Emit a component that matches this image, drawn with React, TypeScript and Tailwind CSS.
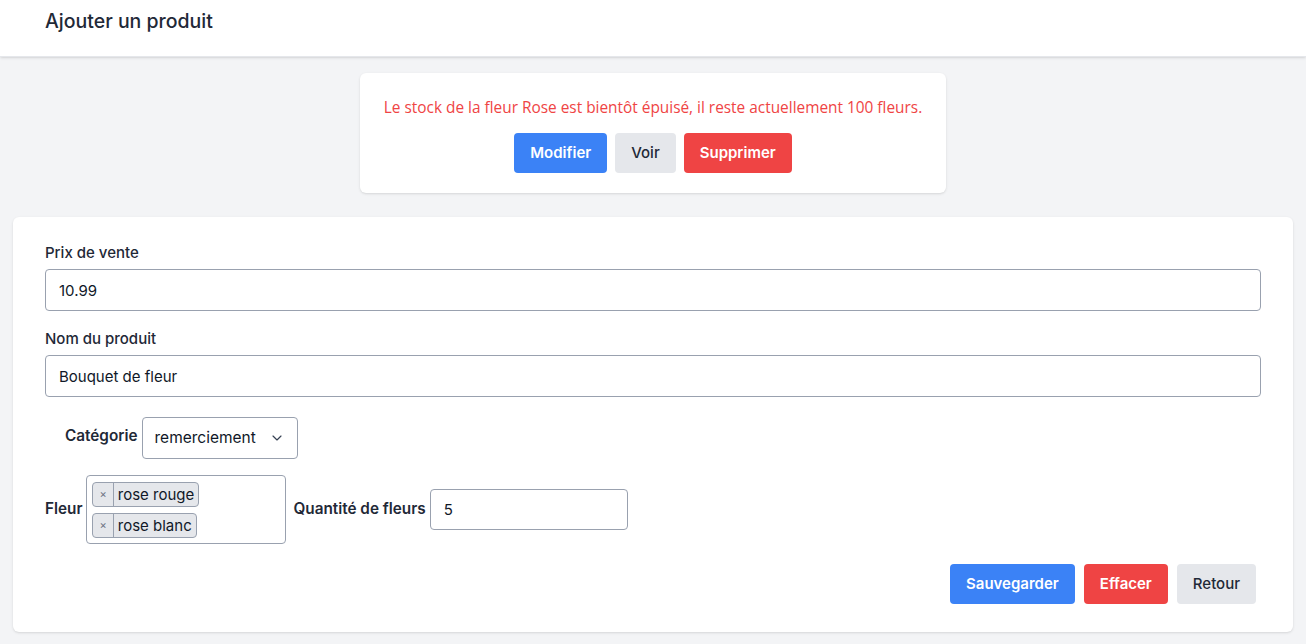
import { ChevronDown } from "lucide-react";

const Tag = ({ label }: { label: string }) => (
  <span className="inline-flex items-center h-[25px] bg-[#e5e7eb] border border-gray-400 rounded text-[15px] text-gray-900">
    <span className="px-1.5 text-[11px] text-gray-500 border-r border-gray-400 h-full flex items-center">×</span>
    <span className="px-1 leading-none">{label}</span>
  </span>
);

export default function App() {
  return (
    <div className="min-h-screen bg-[#f3f4f6] font-['Inter',sans-serif] text-[#1f2937]">
      {/* En-tête */}
      <header className="h-[57px] bg-white shadow-sm border-b border-gray-200 px-[45px] pt-[7px]">
        <h1 className="text-[19.5px] font-medium">Ajouter un produit</h1>
      </header>

      {/* Alerte stock */}
      <div className="flex justify-center pt-4">
        <div className="w-[586px] bg-white rounded-md shadow-sm px-4 pt-[23px] pb-5 flex flex-col items-center gap-[13px]">
          <p className="whitespace-nowrap text-[15.4px] leading-6 text-[#ef4444] font-['Open_Sans',sans-serif]">
            Le stock de la fleur Rose est bientôt épuisé, il reste actuellement 100 fleurs.
          </p>
          <div className="flex gap-2">
            <button className="h-10 px-4 rounded bg-[#3b82f6] text-white font-semibold text-[15px]">Modifier</button>
            <button className="h-10 px-4 rounded bg-[#e5e7eb] font-medium text-[15px]">Voir</button>
            <button className="h-10 px-4 rounded bg-[#ef4444] text-white font-semibold text-[15px]">Supprimer</button>
          </div>
        </div>
      </div>

      {/* Formulaire */}
      <div className="px-[13px] pt-[24px] pb-3">
        <div className="bg-white rounded-md shadow-sm px-8 pt-[26px] pb-[28px]">
          <label className="block text-[15px] leading-5 font-medium mb-[6px]">Prix de vente</label>
          <input
            readOnly
            value="10.99"
            className="w-full h-[42px] border border-gray-400 rounded px-[13px] text-[15px] text-gray-900 outline-none"
          />

          <label className="block text-[15px] leading-5 font-medium mt-[18px] mb-[6px]">Nom du produit</label>
          <input
            readOnly
            value="Bouquet de fleur"
            className="w-full h-[42px] border border-gray-400 rounded px-[13px] text-[15px] text-gray-900 outline-none"
          />

          <div className="flex items-start gap-1 mt-[20px] ml-5">
            <span className="text-[15.3px] leading-5 font-semibold mt-[9px]">Catégorie</span>
            <div className="w-[156px] h-[42px] border border-gray-400 rounded flex items-center justify-between px-3 text-[15.5px] text-gray-900">
              <span>remerciement</span>
              <ChevronDown size={16} strokeWidth={1.75} className="text-gray-700" />
            </div>
          </div>

          <div className="flex items-center gap-1 mt-[16px]">
            <span className="text-[15.3px] font-semibold">Fleur</span>
            <div className="w-[200px] h-[69px] border border-gray-400 rounded px-[5px] pt-[6px] flex flex-col items-start gap-[6px]">
              <Tag label="rose rouge" />
              <Tag label="rose blanc" />
            </div>
            <span className="text-[15.3px] font-semibold ml-[3px]">Quantité de fleurs</span>
            <input
              readOnly
              value="5"
              className="w-[198px] h-[41px] border border-gray-400 rounded px-[13px] text-[15px] text-gray-900 outline-none"
            />
          </div>

          <div className="flex justify-end gap-[9px] mt-[20px] mr-[5px]">
            <button className="h-10 px-4 rounded bg-[#3b82f6] text-white font-semibold text-[15px]">Sauvegarder</button>
            <button className="h-10 px-4 rounded bg-[#ef4444] text-white font-semibold text-[15px]">Effacer</button>
            <button className="h-10 px-4 rounded bg-[#e5e7eb] font-medium text-[15px]">Retour</button>
          </div>
        </div>
      </div>
    </div>
  );
}
